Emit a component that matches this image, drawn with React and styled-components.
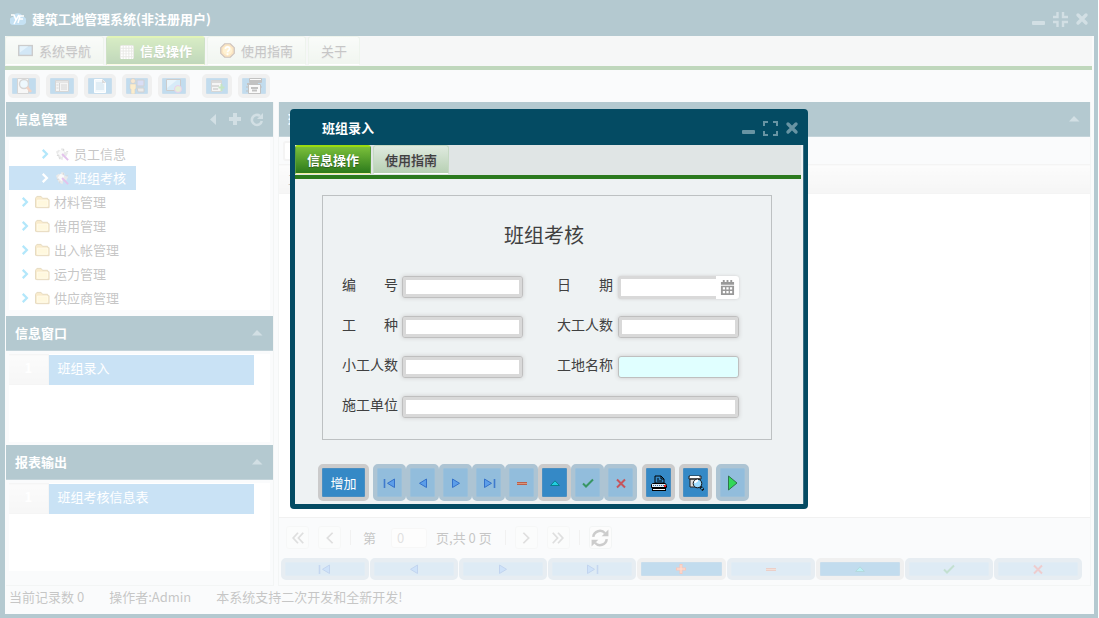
import React, { useState } from 'react';
import styled, { createGlobalStyle, css } from 'styled-components';

const GlobalStyle = createGlobalStyle`
  * {
    box-sizing: border-box;
  }

  body {
    margin: 0;
    background: #fff;
    color: #404040;
    font-family: 'Noto Sans CJK SC', 'Noto Sans', sans-serif;
    font-size: 13px;
    line-height: 20px;
  }

  button, input {
    font: inherit;
    color: inherit;
    margin: 0;
    padding: 0;
    border: 0;
    background: none;
  }

  svg {
    display: block;
    flex: none;
  }
`;

const Window = styled.div`
  display: flex;
  flex-direction: column;
  min-height: 100vh;
  margin-right: 1px;
  padding: 0 4px 4px 5px;
  background: #044b63;
`;

const TitleBar = styled.header`
  display: flex;
  align-items: center;
  height: 36px;
  padding: ${(props) => (props.$dialog ? '2px 4px 0 27px' : '2px 4px 0 5px')};
  color: #fff;
`;

const WindowTitle = styled.h1`
  flex: 1;
  margin: 0;
  font-size: 13px;
  font-weight: bold;
`;

const AppLogo = styled.span`
  margin-right: 6px;
`;

const Tools = styled.div`
  display: flex;
  align-items: center;
  gap: 6px;
`;

const ToolButton = styled.button`
  display: flex;
  color: #6894a3;
`;

const WindowBody = styled.main`
  display: flex;
  flex-direction: column;
  flex: 1;
  background: #eef2f3;
`;

const TabBar = styled.nav`
  display: flex;
  gap: 2px;
  height: 34px;
  margin-right: 2px;
  background: #e0e5e5;
  border-bottom: 4px solid #2b7a1e;
`;

const Tab = styled.button`
  display: flex;
  align-items: center;
  gap: 6px;
  height: 29px;
  padding: 0 ${(props) => (props.$bold ? '11px' : '12px')};
  border: 1px solid #c5d9c3;
  border-bottom: 1px solid #fff;
  border-radius: 3px 3px 0 0;
  background: ${(props) =>
    props.$bold ? 'linear-gradient(#dfeadf, #b7d0b3)' : 'linear-gradient(#edf3ec, #cfdfcc)'};
  color: #404040;
  font-weight: ${(props) => (props.$bold ? 500 : 400)};
  text-shadow: 0 1px 1px #aaa;

  ${(props) =>
    props.$active &&
    css`
      border-color: #6bb32e #5a9e3e #f2f2a0;
      border-top: 2px solid #9bdb10;
      background: linear-gradient(#7abf3a, #2c7a1c);
      color: #fff;
      font-weight: bold;
      text-shadow: 0 1px 1px #2c5a1c;
    `}
`;

const Toolbar = styled.div`
  display: flex;
  align-items: center;
  gap: 12px;
  height: 32px;
  padding: 0 3px;
`;

const ToolGroup = styled.div`
  display: flex;
  gap: 6px;
`;

const ActionButton = styled.button`
  display: flex;
  align-items: center;
  justify-content: center;
  flex: ${(props) => (props.$grow ? '1 1 0' : 'none')};
  width: ${(props) => props.$width || 'auto'};
  height: ${(props) => props.$height};
  border: 4px solid #cbcbcb;
  border-radius: 5px;
  background: #3589c6;
  background-clip: padding-box;
  box-shadow: inset 0 0 0 1px #4a8fc2;
  color: #fff;

  &:disabled {
    border-color: #adc4d3;
    background-color: #92bddc;
    box-shadow: inset 0 0 0 1px #9bc0da;
  }

  &:disabled svg {
    opacity: 0.75;
  }
`;

const Columns = styled.div`
  display: flex;
  flex: 1;
  gap: 4px;
  padding: 0 3px 0 1px;
`;

const Sidebar = styled.aside`
  display: flex;
  flex-direction: column;
  width: 268px;
  border-right: 1px solid #d8dcdd;
  border-bottom: 1px solid #d8dcdd;
`;

const Content = styled.section`
  display: flex;
  flex-direction: column;
  flex: 1;
  border: 1px solid #d8dcdd;
  border-top: 0;
`;

const PanelHeader = styled.header`
  display: flex;
  align-items: center;
  height: 35px;
  padding: 0 8px 0 9px;
  background: #044b63;
  color: #fff;
  border-bottom: 1px solid #3a7084;
`;

const PanelTitle = styled.h2`
  flex: 1;
  margin: 0;
  font-size: 13px;
  font-weight: bold;
`;

const PanelBody = styled.div`
  min-height: ${(props) => props.$height};
  margin: 3px 3px ${(props) => props.$gap};
  padding-top: ${(props) => props.$top || '0'};
  background: #fff;
`;

const TreeList = styled.ul`
  margin: 0;
  padding: 0;
  list-style: none;
`;

const TreeNode = styled.button`
  display: flex;
  align-items: center;
  gap: 4px;
  height: 24px;
  padding: 0 10px 0 ${(props) => (props.$level === 2 ? '30px' : '10px')};
  color: ${(props) => (props.$active ? '#fff' : '#404040')};
  background: ${(props) => (props.$active ? '#4b9ede' : 'none')};
`;

const Chevron = styled.span`
  color: ${(props) => (props.$active ? '#fff' : '#00b0f0')};
`;

const ListTable = styled.table`
  width: 245px;
  border-collapse: collapse;
`;

const NumberCell = styled.th`
  width: 39px;
  height: 30px;
  padding: 0 0 4px;
  border: 1px solid #dcdcdc;
  border-left: 0;
  background: linear-gradient(#f2f2f2, #e2e2e2);
  color: #fff;
`;

const ListCell = styled.td`
  padding: 0 9px 4px;
  background: #4b9ede;
  color: #fff;
`;

const FilterRow = styled.div`
  padding: 4px;
  height: 27px;
`;

const FilterInput = styled.input`
  display: block;
  width: 150px;
  height: 20px;
  border: 2px solid #d9d9d9;
  border-radius: 3px;
  background: #fff;
`;

const GridArea = styled.div`
  flex: 1;
  background: #fff;
  border-bottom: 1px solid #cfcfcf;
`;

const GridTable = styled.table`
  width: 100%;
  border-collapse: collapse;
`;

const GridHead = styled.th`
  height: 29px;
  padding: 0 9px;
  background: linear-gradient(#f4f4f4, #dedede);
  border-top: 1px solid #dadada;
  border-bottom: 1px solid #dadada;
  font-weight: 400;
  text-align: left;
`;

const Pager = styled.div`
  display: flex;
  align-items: center;
  gap: 9px;
  height: 39px;
  padding: 0 7px;
`;

const PagerButton = styled.button`
  display: flex;
  align-items: center;
  justify-content: center;
  width: 23px;
  height: 23px;
  border: 1px solid #d8dcdd;
  border-radius: 3px;
  background: #f4f4f4;
  color: #555;

  &:disabled {
    opacity: 0.6;
  }
`;

const Separator = styled.span`
  width: 1px;
  height: 15px;
  background: #d0d0d0;
`;

const PageLabel = styled.label`
  display: flex;
  align-items: center;
  gap: 15px;
  padding: 0 0 0 3px;
`;

const PageInput = styled.input`
  width: 36px;
  height: 20px;
  padding: 0 5px;
  border: 1px solid #e4e4e4;
  border-radius: 3px;
  background: #f7f7f7;
  color: #999;
`;

const PageCount = styled.span`
  padding-right: 4px;
`;

const RecordBar = styled.div`
  display: flex;
  gap: 1px;
  height: 28px;
  padding: 1px 8px 0 2px;
`;

const StatusBar = styled.footer`
  display: flex;
  gap: 25px;
  height: 28px;
  padding: 1px 4px;
`;

const Mask = styled.div`
  position: fixed;
  inset: 0;
  display: flex;
  align-items: center;
  justify-content: center;
  padding-right: 1px;
  background: rgba(255, 255, 255, 0.7);
`;

const Dialog = styled.section`
  width: 518px;
  padding: 0 4px 5px 5px;
  border-radius: 4px;
  background: #044b63;
`;

const DialogBody = styled.div`
  background: #eef2f3;
  border-right: 1px solid #3a7084;
`;

const Form = styled.form`
  padding: 16px 31px 3px 23px;
`;

const FieldBox = styled.div`
  margin: 0 0 24px 4px;
  padding: 24px 19px 5px;
  border: 1px solid #bdc1c2;
`;

const FormTitle = styled.h2`
  margin: 0 0 24px;
  padding-right: 6px;
  font-size: 20px;
  font-weight: 400;
  line-height: 30px;
  text-align: center;
`;

const FieldGrid = styled.div`
  display: grid;
  grid-template-columns: 181px 182px;
  grid-auto-rows: 40px;
  column-gap: 34px;
  align-items: start;
  font-size: 14px;
`;

const FieldPair = styled.div`
  display: grid;
  grid-template-columns: ${(props) => (props.$second ? '61px' : '60px')} 1fr;
  grid-column: ${(props) => (props.$wide ? '1 / -1' : 'auto')};
`;

const TextField = styled.input`
  width: 100%;
  height: 22px;
  margin-top: 2px;
  padding: 0 6px;
  border: 1px solid #bfbfbf;
  border-radius: 3px;
  background: ${(props) => (props.$highlight ? '#e0ffff' : '#fff')};
  box-shadow: ${(props) => (props.$highlight ? '' : 'inset 0 0 0 3px #d9d9d9, ')}0 0 4px #ccc;
`;

const DateField = styled.span`
  display: flex;
  min-width: 0;
  height: 23px;
  margin-top: 2px;
  border-radius: 3px;
  background: #fff;
  box-shadow: 0 0 3px #ccc;
`;

const DateInput = styled.input`
  flex: 1;
  width: 100%;
  min-width: 0;
  padding: 0 6px;
  border: 3px solid #d9d9d9;
  border-right: 0;
  border-radius: 3px 0 0 3px;
`;

const DateButton = styled.button`
  flex: none;
  width: 23px;
  padding: 0 4px;
  color: #999;
`;

const FormActions = styled.div`
  display: flex;
  gap: 4px;
`;

const ButtonGroup = styled.div`
  display: flex;
  margin-right: 1px;
`;

const shapes = {
  minimize: <rect x="2" y="10" width="13" height="4" rx="1" fill="currentColor" />,
  maximize: (
    <path
      d="M2 6V2h4M11 2h4v4M15 11v4h-4M6 15H2v-4"
      fill="none"
      stroke="currentColor"
      strokeWidth="2"
    />
  ),
  restore: (
    <path
      d="M1 6h4.5V1M11 1v5h5M16 11h-5v5M5.5 16v-5H1"
      fill="none"
      stroke="currentColor"
      strokeWidth="2.4"
    />
  ),
  close: <path d="M4 4l8 8M12 4l-8 8" stroke="currentColor" strokeWidth="3.4" strokeLinecap="round" />,
  caretLeft: <path d="M11 3v11L5 8.500z" fill="currentColor" />,
  caretUp: <path d="M3 10.5h10.5L8 5z" fill="currentColor" />,
  plus: <path d="M8 2v12M2 8h12" stroke="currentColor" strokeWidth="4" />,
  reload: (
    <>
      <path d="M11 5a5 5 0 1 0 1.800 5" fill="none" stroke="currentColor" strokeWidth="2.6" />
      <path d="M14 2v6H8z" fill="currentColor" />
    </>
  ),
  chevron: <path d="M5 2.500L10.500 8 5 13.500" fill="none" stroke="currentColor" strokeWidth="3" />,
  folder: (
    <>
      <path d="M.5 13V3.500L2 1.500h4.500L8 3.500h5.500V5H15v8.500H2z" fill="#e9bd54" stroke="#a8812b" />
      <path d="M2.500 5.500h11v6.500h-11z" fill="#ffe792" stroke="#fff3bd" />
    </>
  ),
  wand: (
    <>
      <path d="M1 5l3-2 2 1 1-3 3 1v3l4 1-2 4-3-1-1 5-4-2z" fill="#b9b9b9" />
      <path d="M3 7l3-4 4 2-3 6z" fill="#eee" />
      <path d="M2 9h2M9 2v2M12 5h2M5 11v2" stroke="#777" />
      <path d="M7.500 7.500L14 14" stroke="#a032c0" strokeWidth="2" />
    </>
  ),
  screen: (
    <>
      <rect x="0" y="2" width="16" height="12" fill="#555" />
      <rect x="1.500" y="3.500" width="13" height="9" fill="#6ab0e0" />
      <path d="M2 3.500h9L2 10z" fill="#a8d8f4" />
    </>
  ),
  grid: (
    <>
      <rect x="1" y="1" width="15" height="15" rx="2" fill="#b4b4a8" />
      <path
        d="M2 3h13M2 6h13M2 9h13M2 12h13M2 15h13"
        stroke="#fff"
        strokeWidth="2"
        strokeDasharray="2 1"
      />
    </>
  ),
  help: (
    <>
      <path d="M5 .8h6L15.200 5v6L11 15.200H5L.8 11V5z" fill="#f0a835" stroke="#5b3826" strokeWidth="1.300" />
      <circle cx="8" cy="8" r="5" fill="#ffd36a" />
      <path d="M5.800 6.300c0-3 4.600-2.800 4.400 0C10.100 8 8 8 8 9.800M8 11v2" fill="none" stroke="#fff" strokeWidth="1.800" />
    </>
  ),
  search: (
    <>
      <path d="M1.500 .5h11v15h-11z" fill="#e4e4e4" stroke="#777" />
      <circle cx="8" cy="6" r="4.500" fill="#c5e6f7" stroke="#777" strokeWidth="1.400" />
      <path d="M11 9l4 5" stroke="#d26b3b" strokeWidth="2.600" />
    </>
  ),
  columns: (
    <>
      <path d="M1.500 2.500h13v11h-13z" fill="#ddd" stroke="#777" />
      <path d="M2 4h12M5.500 5v8M2.500 7h2M2.500 10h2M7 7h6M7 9h6M7 11h6" stroke="#777" />
    </>
  ),
  page: (
    <>
      <path d="M2.500 1.500h8l3 3v10h-11z" fill="#d7ecf8" stroke="#fff" />
      <path d="M4 5h7M4 7h8M4 9h8M4 11h8" stroke="#5b9cc4" />
      <path d="M10 1l4 4h-4z" fill="#888" />
    </>
  ),
  user: (
    <>
      <path d="M8 2h7v6H8z" fill="#7d8fe0" stroke="#666" />
      <path d="M8 10h7v4H9z" fill="#bbb" stroke="#666" />
      <circle cx="4" cy="3" r="2.500" fill="#e6b063" stroke="#555" strokeWidth=".6" />
      <path d="M1 6h6v5H6v5H2v-5H1z" fill="#f4c454" stroke="#666" strokeWidth=".6" />
    </>
  ),
  monitor: (
    <>
      <path d="M.5 1.500h14v11H.5z" fill="#7bbbe8" stroke="#555" />
      <path d="M1 2h10l-10 8z" fill="#b5dcf4" />
      <circle cx="12" cy="11" r="3.500" fill="#a8ce80" stroke="#b55ac4" />
    </>
  ),
  export: (
    <>
      <path d="M2.500 2.500h10v11h-10z" fill="#ddd" stroke="#777" />
      <path d="M3 4h9M3 8h7M4 11h5" stroke="#666" strokeWidth="1.500" />
      <path d="M12.500 6v7M9.500 9.500h6" stroke="#3fa83a" strokeWidth="2" />
    </>
  ),
  report: (
    <>
      <path d="M3.500 .5h12v4h-12zM2.500 6.500h12v9h-12z" fill="#eee" stroke="#333" />
      <path d="M4 3h11M1 6h11" stroke="#333" strokeWidth="2" />
      <path d="M5 10h7M6 12.500h5" stroke="#333" strokeWidth="2" />
      <path d="M0 9h2M0 13h2M14 9h2" stroke="#333" />
    </>
  ),
  first: (
    <>
      <path d="M2.500 4v9" stroke="#2466c8" strokeWidth="1.600" />
      <path d="M12.500 4v8.500L5.500 8.300z" fill="#4a94ee" stroke="#1558c4" />
    </>
  ),
  previous: <path d="M11.500 4v8.500L4.500 8.300z" fill="#4a94ee" stroke="#1558c4" />,
  next: <path d="M4.500 4v8.500l7-4.200z" fill="#4a94ee" stroke="#1558c4" />,
  last: (
    <>
      <path d="M13.500 4v9" stroke="#2466c8" strokeWidth="1.600" />
      <path d="M3.500 4v8.500l7-4.200z" fill="#4a94ee" stroke="#1558c4" />
    </>
  ),
  add: (
    <>
      <path d="M8 3v10M3 8h10" stroke="#e8431b" strokeWidth="3" />
      <path d="M8 4v8M4 8h8" stroke="#ff9a6c" />
    </>
  ),
  remove: (
    <>
      <path d="M3 8.500h10" stroke="#c9401a" strokeWidth="3" />
      <path d="M3 8.500h10" stroke="#f08a5c" />
    </>
  ),
  up: <path d="M3.500 10.500h9L8 5.800z" fill="#21cfe0" stroke="#07818f" />,
  check: <path d="M3 8.500l3 3 7-7" fill="none" stroke="#1b8a3c" strokeWidth="2" />,
  cancel: <path d="M4 4.500l8 8M12 4.500l-8 8" stroke="#d83232" strokeWidth="2" />,
  print: (
    <>
      <path d="M4 8V1h6l3 3v4z" fill="#3589c6" stroke="#000" />
      <path d="M10 1v3h3M6 4h2M6 6h5" fill="none" stroke="#000" />
      <path d="M1.500 8.500h13l1 2v2h-15v-3z" fill="#dbe9f4" stroke="#000" />
      <path d="M2 10.500h11" stroke="#34689a" strokeDasharray="1 1" />
      <path d="M1 14.500h14" stroke="#000" strokeWidth="3" />
      <path d="M2 14.500h12" stroke="#fff" />
      <path d="M13 11h2" stroke="#e22" strokeWidth="2" />
    </>
  ),
  preview: (
    <>
      <path d="M1 1h12v3H1zM2 4h10v8H2z" fill="#ddd" stroke="#222" />
      <path d="M2 2h9" stroke="#fff" strokeWidth="2" />
      <circle cx="9.500" cy="8.500" r="4.300" fill="#9edcff" stroke="#111" />
      <path d="M7 8c.5-2 2-2.500 3-2.500" fill="none" stroke="#fff" strokeWidth="2" />
      <path d="M12.500 12l3 3" stroke="#111" strokeWidth="3" />
      <path d="M13.500 13l1 1" stroke="#52a6e0" strokeWidth="2" />
    </>
  ),
  run: <path d="M3.500 1v14L12 8z" fill="#13e22e" stroke="#0d5f1b" />,
  pageFirst: <path d="M8 2L2.500 8 8 14M14 2L8.500 8l5.500 6" fill="none" stroke="currentColor" strokeWidth="2" />,
  pagePrevious: <path d="M11 2L5 8l6 6" fill="none" stroke="currentColor" strokeWidth="2" />,
  pageNext: <path d="M5 2l6 6-6 6" fill="none" stroke="currentColor" strokeWidth="2" />,
  pageLast: <path d="M2 2l5.500 6L2 14M8 2l5.500 6L8 14" fill="none" stroke="currentColor" strokeWidth="2" />,
  refresh: (
    <>
      <path d="M2 7a6 6 0 0 1 10.500-3.200M14 9a6 6 0 0 1-10.500 3.200" fill="none" stroke="currentColor" strokeWidth="2.200" />
      <path d="M15.500.5v6h-6zM.5 15.500v-6h6z" fill="currentColor" />
    </>
  ),
  calendar: (
    <>
      <path d="M1 2h14v3H1zM1 6h14v10H1zM3 0h2v3H3zM11 0h2v3h-2zM7 0h2v3H7z" fill="currentColor" />
      <path d="M3 9h10M3 13h10" stroke="#fff" strokeWidth="2.400" strokeDasharray="2.400 1.400" />
    </>
  ),
};

const Icon = ({ name, size = 16 }) => (
  <svg width={size} height={size} viewBox="0 0 16 16" aria-hidden="true">
    {shapes[name]}
  </svg>
);

const mainTabs = [
  { label: '系统导航', icon: 'screen' },
  { label: '信息操作', icon: 'grid' },
  { label: '使用指南', icon: 'help' },
  { label: '关于' },
];

const treeNodes = [
  { label: '员工信息', level: 2 },
  { label: '班组考核', level: 2 },
  { label: '材料管理', level: 1 },
  { label: '借用管理', level: 1 },
  { label: '出入帐管理', level: 1 },
  { label: '运力管理', level: 1 },
  { label: '供应商管理', level: 1 },
];

const toolbarGroups = [
  [
    { icon: 'search', width: '32px' },
    { icon: 'columns', width: '32px' },
    { icon: 'page', width: '32px' },
    { icon: 'user', width: '30px' },
    { icon: 'monitor', width: '32px' },
  ],
  [
    { icon: 'export', width: '30px' },
    { icon: 'report', width: '32px' },
  ],
];

const recordActions = [
  { icon: 'first', title: '首记录' },
  { icon: 'previous', title: '上一条' },
  { icon: 'next', title: '下一条' },
  { icon: 'last', title: '末记录' },
  { icon: 'add', title: '增加', enabled: true },
  { icon: 'remove', title: '删除' },
  { icon: 'up', title: '修改', enabled: true },
  { icon: 'check', title: '保存' },
  { icon: 'cancel', title: '取消' },
];

const WindowTools = ({ names }) => (
  <Tools>
    {names.map((name) => (
      <ToolButton key={name} type="button" aria-label={name}>
        <Icon name={name} />
      </ToolButton>
    ))}
  </Tools>
);

const SidePanel = ({ title, item, gap }) => (
  <>
    <PanelHeader>
      <PanelTitle>{title}</PanelTitle>
      <WindowTools names={['caretUp']} />
    </PanelHeader>
    <PanelBody $height="88px" $gap={gap}>
      <ListTable>
        <tbody>
          <tr>
            <NumberCell scope="row">1</NumberCell>
            <ListCell>{item}</ListCell>
          </tr>
        </tbody>
      </ListTable>
    </PanelBody>
  </>
);

const Field = ({ id, label, wide, second, children }) => (
  <FieldPair $wide={wide} $second={second}>
    <label htmlFor={id}>{label}</label>
    {children}
  </FieldPair>
);

const EntryDialog = () => {
  const [tab, setTab] = useState('信息操作');

  return (
    <Dialog role="dialog" aria-label="班组录入">
      <TitleBar $dialog>
        <WindowTitle as="h2">班组录入</WindowTitle>
        <WindowTools names={['minimize', 'maximize', 'close']} />
      </TitleBar>
      <DialogBody>
        <TabBar>
          {['信息操作', '使用指南'].map((label) => (
            <Tab key={label} type="button" $bold $active={tab === label} onClick={() => setTab(label)}>
              {label}
            </Tab>
          ))}
        </TabBar>
        <Form onSubmit={(e) => e.preventDefault()}>
          <FieldBox>
            <FormTitle>班组考核</FormTitle>
            <FieldGrid>
              <Field id="code" label="编　　号">
                <TextField id="code" />
              </Field>
              <Field id="date" label="日　　期" second>
                <DateField>
                  <DateInput id="date" />
                  <DateButton type="button" aria-label="选择日期">
                    <Icon name="calendar" size={15} />
                  </DateButton>
                </DateField>
              </Field>
              <Field id="trade" label="工　　种">
                <TextField id="trade" />
              </Field>
              <Field id="skilled" label="大工人数" second>
                <TextField id="skilled" />
              </Field>
              <Field id="helpers" label="小工人数">
                <TextField id="helpers" />
              </Field>
              <Field id="site" label="工地名称" second>
                <TextField id="site" $highlight />
              </Field>
              <Field id="company" label="施工单位" wide>
                <TextField id="company" />
              </Field>
            </FieldGrid>
          </FieldBox>
          <FormActions>
            <ActionButton type="submit" $width="51px" $height="37px">
              增加
            </ActionButton>
            <ButtonGroup>
              {recordActions
                .filter((action) => action.icon !== 'add')
                .map((action) => (
                  <ActionButton
                    key={action.icon}
                    type="button"
                    aria-label={action.title}
                    disabled={!action.enabled}
                    $width="33px"
                    $height="37px"
                  >
                    <Icon name={action.icon} />
                  </ActionButton>
                ))}
            </ButtonGroup>
            <ActionButton type="button" aria-label="打印" $width="33px" $height="37px">
              <Icon name="print" />
            </ActionButton>
            <ActionButton type="button" aria-label="预览" $width="33px" $height="37px">
              <Icon name="preview" />
            </ActionButton>
            <ActionButton type="button" aria-label="执行" disabled $width="33px" $height="37px">
              <Icon name="run" />
            </ActionButton>
          </FormActions>
        </Form>
      </DialogBody>
    </Dialog>
  );
};

const App = () => {
  const [activeTab, setActiveTab] = useState('信息操作');
  const [activeNode, setActiveNode] = useState('班组考核');
  const [page, setPage] = useState('0');

  return (
    <>
      <GlobalStyle />
      <Window>
        <TitleBar>
          <AppLogo>
            <svg width="16" height="16" viewBox="0 0 16 16" aria-hidden="true">
              <path d="M4 14a4 4 0 0 1-1-8A5 5 0 0 1 12.500 5.500a4.200 4.200 0 0 1-.5 8.500z" fill="#3c9bd8" />
              <path d="M1 4h3l2 5 3-5M6 9l-2 4M8 12l2-7h4M9 8h4" fill="none" stroke="#fff" strokeWidth="1.500" />
            </svg>
          </AppLogo>
          <WindowTitle>建筑工地管理系统(非注册用户)</WindowTitle>
          <WindowTools names={['minimize', 'restore', 'close']} />
        </TitleBar>
        <WindowBody>
          <TabBar>
            {mainTabs.map((tab) => (
              <Tab
                key={tab.label}
                type="button"
                $active={tab.label === activeTab}
                onClick={() => setActiveTab(tab.label)}
              >
                {tab.icon && <Icon name={tab.icon} size={15} />}
                {tab.label}
              </Tab>
            ))}
          </TabBar>
          <Toolbar>
            {toolbarGroups.map((group) => (
              <ToolGroup key={group[0].icon}>
                {group.map(({ icon, width }) => (
                  <ActionButton key={icon} type="button" aria-label={icon} $width={width} $height="24px">
                    <Icon name={icon} />
                  </ActionButton>
                ))}
              </ToolGroup>
            ))}
          </Toolbar>
          <Columns>
            <Sidebar>
              <PanelHeader>
                <PanelTitle>信息管理</PanelTitle>
                <WindowTools names={['caretLeft', 'plus', 'reload']} />
              </PanelHeader>
              <PanelBody $height="170px" $gap="6px" $top="2px">
                <TreeList>
                  {treeNodes.map((node) => {
                    const active = node.label === activeNode;
                    return (
                      <li key={node.label}>
                        <TreeNode
                          type="button"
                          $level={node.level}
                          $active={active}
                          onClick={() => setActiveNode(node.label)}
                        >
                          <Chevron $active={active}>
                            <Icon name="chevron" size={12} />
                          </Chevron>
                          <Icon name={node.level === 2 ? 'wand' : 'folder'} size={15} />
                          {node.label}
                        </TreeNode>
                      </li>
                    );
                  })}
                </TreeList>
              </PanelBody>
              <SidePanel title="信息窗口" item="班组录入" gap="3px" />
              <SidePanel title="报表输出" item="班组考核信息表" gap="14px" />
            </Sidebar>
            <Content>
              <PanelHeader>
                <PanelTitle>班组</PanelTitle>
                <WindowTools names={['caretUp']} />
              </PanelHeader>
              <FilterRow>
                <FilterInput aria-label="查询" />
              </FilterRow>
              <GridArea>
                <GridTable>
                  <thead>
                    <tr>
                      <GridHead>工种</GridHead>
                    </tr>
                  </thead>
                </GridTable>
              </GridArea>
              <Pager>
                <PagerButton type="button" disabled aria-label="首页">
                  <Icon name="pageFirst" size={14} />
                </PagerButton>
                <PagerButton type="button" disabled aria-label="上一页">
                  <Icon name="pagePrevious" size={14} />
                </PagerButton>
                <Separator />
                <PageLabel>
                  第
                  <PageInput value={page} onChange={(e) => setPage(e.target.value)} />
                </PageLabel>
                <PageCount>页,共 0 页</PageCount>
                <Separator />
                <PagerButton type="button" disabled aria-label="下一页">
                  <Icon name="pageNext" size={14} />
                </PagerButton>
                <PagerButton type="button" disabled aria-label="末页">
                  <Icon name="pageLast" size={14} />
                </PagerButton>
                <Separator />
                <PagerButton type="button" aria-label="刷新">
                  <Icon name="refresh" size={18} />
                </PagerButton>
              </Pager>
              <RecordBar>
                {recordActions.map((action) => (
                  <ActionButton
                    key={action.icon}
                    type="button"
                    aria-label={action.title}
                    disabled={!action.enabled}
                    $grow
                    $height="22px"
                  >
                    <Icon name={action.icon} />
                  </ActionButton>
                ))}
              </RecordBar>
            </Content>
          </Columns>
          <StatusBar>
            <span>当前记录数 0</span>
            <span>操作者:Admin</span>
            <span>本系统支持二次开发和全新开发!</span>
          </StatusBar>
        </WindowBody>
      </Window>
      <Mask>
        <EntryDialog />
      </Mask>
    </>
  );
};

export default App;
